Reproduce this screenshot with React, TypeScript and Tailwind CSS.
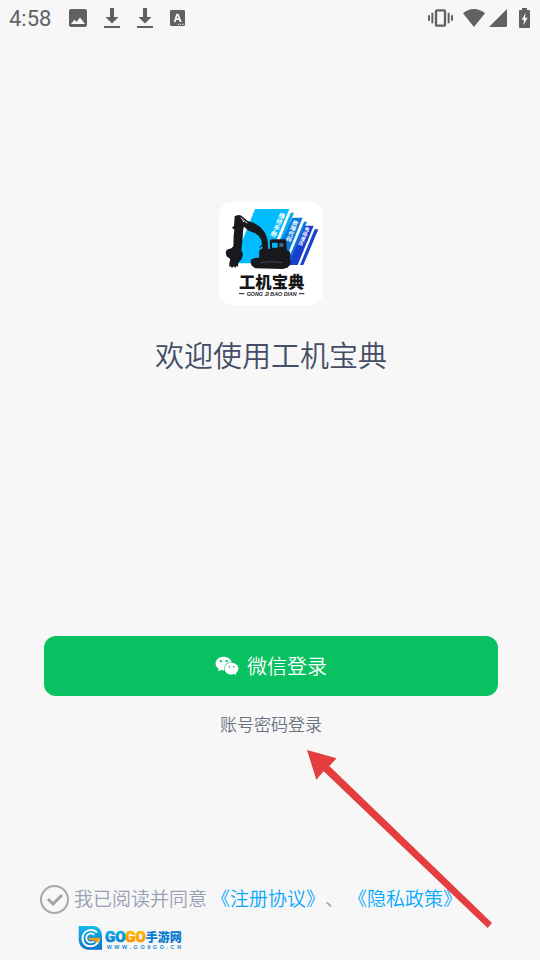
import * as React from "react";
import { FaWeixin } from "react-icons/fa";

function DownloadIcon() {
  return (
    <svg className="h-5 w-4" viewBox="0 0 16 20" fill="currentColor" aria-hidden="true">
      <path d="M6 0h4v9h4.500L8 15.500 1.500 9H6z" />
      <path d="M0 18h16v2H0z" />
    </svg>
  );
}

function StatusBar() {
  return (
    <header className="flex h-9 items-center justify-between pl-[9px] pr-[10px] text-[#616161]">
      <div className="flex items-center">
        <span className="w-[60px] pt-px font-[Roboto,sans-serif] text-[22px] leading-6 font-[450]">4:58</span>
        <svg className="h-[18px] w-[18px]" viewBox="3 3 18 18" fill="currentColor" aria-hidden="true">
          <path d="M21 19V5c0-1.100-.9-2-2-2H5c-1.100 0-2 .9-2 2v14c0 1.100.9 2 2 2h14c1.100 0 2-.9 2-2zM5 18l3.500-4.500 2 2.500L14 11.500 19 18z" />
        </svg>
        <span className="ml-[17px] flex gap-[17px]">
          <DownloadIcon />
          <DownloadIcon />
        </span>
        <svg className="ml-[17px] h-4 w-[15px]" viewBox="0 0 45 48" aria-hidden="true">
          <rect width="45" height="48" rx="4" fill="currentColor" />
          <path
            d="M19 11h7l9 25h-6l-2-6h-8l-2 6h-6zM20.500 25h5L23 17z"
            fill="#f7f7f7"
            fillRule="evenodd"
          />
          <path d="M23 41h4v3h-4zM30 41h4v3h-4zM37 41h4v3h-4z" fill="#f7f7f7" />
        </svg>
      </div>
      <div className="flex items-center">
        <svg className="h-[18px] w-[25px]" viewBox="0 0 75 54" fill="none" stroke="currentColor" aria-hidden="true">
          <rect x="24" y="4" width="27" height="46" rx="3" strokeWidth="7" />
          <path d="M3 19v16M13 11v32M62 11v32M72 19v16" strokeWidth="6" />
        </svg>
        <svg className="ml-[10px] h-[18px] w-[22px]" viewBox="0 0 66 54" fill="currentColor" aria-hidden="true">
          <path d="M33 54L0 13C9 5 20 0 33 0s24 5 33 13z" />
        </svg>
        <svg className="ml-1 h-[18px] w-[18px]" viewBox="0 0 54 54" fill="currentColor" aria-hidden="true">
          <path d="M54 0v50q0 4-4 4H0z" />
        </svg>
        <svg className="ml-3 h-5 w-[11px]" viewBox="0 0 33 60" aria-hidden="true">
          <path d="M9 0h15v6h6q3 0 3 3v48q0 3-3 3H3q-3 0-3-3V9q0-3 3-3h6z" fill="currentColor" />
          <path d="M20 15L8 35h7l-2 17 13-23h-8z" fill="#f7f7f7" />
        </svg>
      </div>
    </header>
  );
}

function AppLogo() {
  return (
    <svg
      className="h-[103px] w-[104px] rounded-[13px] bg-white"
      viewBox="27 21 312 309"
      role="img"
      aria-label="工机宝典"
    >
      {/* Manuals */}
      <path d="M135 42h103l-67 163H70z" fill="#00bcff" />
      <path d="M242 53h10l-60 146h-9z" fill="#09aef0" />
      <path d="M247 68h31l-60 147h-40z" fill="#087bdd" />
      <path d="M282 80h9l-55 132h-9z" fill="#087bdd" />
      <path d="M285 92h26l-48 118h-29z" fill="#1740cc" />
      <path d="M314 103h11l-45 107h-10z" fill="#1740cc" />
      <g
        fill="#fff"
        className="font-['Noto_Sans_CJK_SC',sans-serif] font-bold"
        textAnchor="middle"
        fontSize="19"
      >
        {["维", "修", "手", "册"].map((char, i) => (
          <text key={char} transform={`translate(${213 - i * 8} ${69 + i * 18}) rotate(22)`}>{char}</text>
        ))}
      </g>
      <g
        fill="#fff"
        className="font-['Noto_Sans_CJK_SC',sans-serif] font-bold"
        textAnchor="middle"
        fontSize="17"
      >
        {["故", "障", "代", "码"].map((char, i) => (
          <text key={char} transform={`translate(${253 - i * 6} ${90 + i * 16}) rotate(22)`}>{char}</text>
        ))}
      </g>
      <g
        fill="#fff"
        className="font-['Noto_Sans_CJK_SC',sans-serif] font-bold"
        textAnchor="middle"
        fontSize="15"
      >
        {["电", "路", "液", "压"].map((char, i) => (
          <text key={char} transform={`translate(${289 - i * 6} ${108 + i * 14}) rotate(22)`}>{char}</text>
        ))}
      </g>
      {/* Excavator */}
      <path d="M88 66L104 84 96 120V80z" fill="#fff" />
      <g fill="#17191c">
        <path d="M74 64L84 60 92 62 94 72 100 82 102 92 99 108 98 130 96 150 94 164 99 178 95 192 85 203 84 216 80 212 76 218 71 214 66 219 62 214 58 216 58 204 61 192 50 184 47 174 50 164 64 160 70 154 71 120 73 104 66 98 72 92z" />
        <path d="M88 61L94 62 112 77 132 84 151 96 165 113 172 131 175 166 150 166 149 156 156 149 154 136 147 124 136 115 116 107 98 92 92 80 104 82 88 68z" />
        <path d="M148 166L162 160 180 162 179 138 184 133 224 133 229 138 230 165 240 170 242 185 238 196 150 198 147 188z" />
        <path d="M124 193L138 188 234 190 242 197 241 209 232 218 218 222 136 220 125 212 122 202z" />
      </g>
      <path d="M92 68l20 17" stroke="#e5e5e5" strokeWidth="3" />
      <path d="M186 143h17v15h-17z" fill="#0ab5f2" />
      <path d="M208 145h12v10h-12z" fill="#3d6f99" />
      <path d="M148 160l9-6 1 6-8 4z" fill="#16bdf4" />
      <path d="M150 203q32-7 68 0" stroke="#55585c" strokeWidth="2" fill="none" />
      <text
        x="185"
        y="280"
        textAnchor="middle"
        fontSize="49"
        fill="#15171a"
        className="font-['Noto_Sans_CJK_SC',sans-serif] font-black"
      >
        工机宝典
      </text>
      <path d="M87 296h16M267 296h16" stroke="#17191c" strokeWidth="3" />
      <text
        x="185"
        y="302"
        textAnchor="middle"
        fontSize="16"
        fill="#17191c"
        className="font-['Liberation_Sans',sans-serif] font-bold italic"
      >
        GONG JI BAO DIAN
      </text>
    </svg>
  );
}

function SiteMark() {
  return (
    <svg className="mt-3 ml-[38px] h-6 w-[105px]" viewBox="0 0 315 72" role="img" aria-label="GOGO手游网">
      <defs>
        <linearGradient id="blue" x1="0" y1="0" x2="0" y2="1">
          <stop offset="0" stopColor="#16b9ed" />
          <stop offset="1" stopColor="#0872cc" />
        </linearGradient>
        <linearGradient id="orange" x1="0" y1="0" x2="0" y2="1">
          <stop offset="0" stopColor="#ffc400" />
          <stop offset="1" stopColor="#ff8500" />
        </linearGradient>
      </defs>
      <path d="M2 0h42c18 0 28 14 28 31v40H34C14 71 2 58 2 39z" fill="url(#blue)" />
      <path d="M57 19C45 7 23 11 16 26s1 34 20 35c14 0 24-8 27-22" fill="none" stroke="#fff" strokeWidth="6" />
      <path d="M49 27c-9-9-23-4-24 8s12 19 23 11" fill="none" stroke="#fff" strokeWidth="5" />
      <path d="M31 35h35q-2 12-12 17l-4-9H34z" fill="#ff9c12" />
      <g className="font-[Roboto,sans-serif] font-black" fontSize="45" strokeWidth="2">
        <text x="81" y="48" fill="url(#blue)" stroke="url(#blue)">GO</text>
        <text x="142" y="48" fill="url(#orange)" stroke="url(#orange)">GO</text>
      </g>
      <text
        x="203"
        y="47"
        fontSize="36"
        fill="#087bd0"
        className="font-['Noto_Sans_CJK_SC',sans-serif] font-black"
      >
        手游网
      </text>
      <text
        x="86"
        y="70"
        fontSize="16"
        fill="#1689d5"
        className="font-['Liberation_Sans',sans-serif] font-bold tracking-[8px]"
      >
        WWW.GO9GO.CN
      </text>
    </svg>
  );
}

function PointerArrow() {
  return (
    <svg
      className="pointer-events-none absolute top-[750px] left-[307px] h-[178px] w-[185px]"
      viewBox="50 30 555 534"
      fill="#e53e3e"
      aria-hidden="true"
    >
      <path d="M50 30l89 25-22 23 488 471-13 15L100 94l-22 25z" />
    </svg>
  );
}

export default function App() {
  const [agreed, setAgreed] = React.useState(true);

  return (
    <div className="relative flex min-h-screen flex-col bg-[#f7f7f7] font-['Noto_Sans_CJK_SC',sans-serif] font-[350] [text-spacing-trim:space-all]">
      <StatusBar />

      <main className="flex flex-1 flex-col pt-[166px]">
        <section className="flex flex-col items-center gap-[29px] pl-[2px]">
          <AppLogo />
          <h1 className="text-[29px] leading-10 font-[350] text-[#454c65]">欢迎使用工机宝典</h1>
        </section>

        <section className="mt-auto flex flex-col items-center gap-4 pt-12 pr-[42px] pl-11">
          <button
            type="button"
            className="flex h-[60px] w-full items-center justify-center gap-2 rounded-xl bg-[#09c160] text-[20px] leading-6 text-white"
          >
            <FaWeixin className="h-6 w-6" />
            微信登录
          </button>
          <a href="#password" className="text-[17px] leading-6 text-[#6b7280]">
            账号密码登录
          </a>
        </section>
      </main>

      <footer className="pt-[148px] pb-[10px] pl-10">
        <div className="flex items-start gap-1 text-[19px] leading-7 whitespace-nowrap text-[#999eb5]">
          <label className="flex items-start gap-[5px]">
            <span className="grid h-[30px] w-[29px] pt-px">
              <input
                type="checkbox"
                checked={agreed}
                onChange={(e) => setAgreed(e.target.checked)}
                className="peer col-start-1 row-start-1 h-full w-full appearance-none rounded-full border-2 border-[#a8a8a8]"
              />
              <svg
                className="pointer-events-none invisible col-start-1 row-start-1 h-full w-full peer-checked:visible"
                viewBox="0 0 29 29"
                fill="none"
                stroke="#a3a3a3"
                strokeWidth="3"
                aria-hidden="true"
              >
                <path d="M8 14l5 5 9-9" />
              </svg>
            </span>
            我已阅读并同意
          </label>
          <span>
            <a href="#register" className="text-[#08a8ff]">《注册协议》</a>、
          </span>
          <a href="#privacy" className="text-[#08a8ff]">《隐私政策》</a>
        </div>
        <SiteMark />
      </footer>

      <PointerArrow />
    </div>
  );
}
